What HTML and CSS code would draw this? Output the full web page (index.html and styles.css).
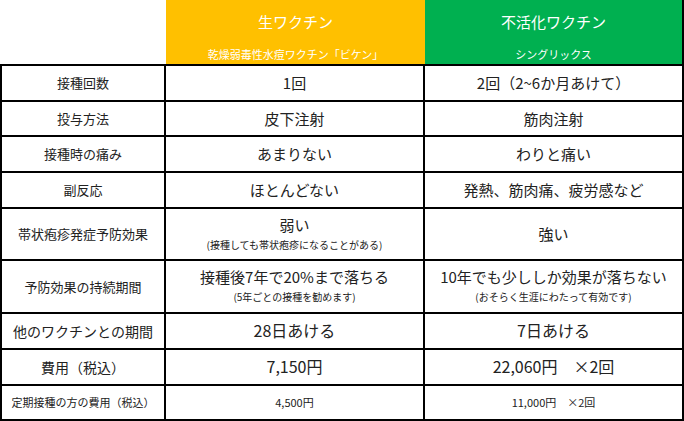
FILE: index.html
```html
<!DOCTYPE html>
<html lang="ja">
<head>
<meta charset="utf-8">
<title>帯状疱疹ワクチン比較</title>
<link rel="stylesheet" href="styles.css">
</head>
<body>
<div class="table">
  <div class="cell head blank"></div>
  <div class="cell head live">
    <div class="title">生ワクチン</div>
    <div class="sub">乾燥弱毒性水痘ワクチン「ビケン」</div>
  </div>
  <div class="cell head inact">
    <div class="title">不活化ワクチン</div>
    <div class="sub">シングリックス</div>
  </div>

  <div class="cell label">接種回数</div>
  <div class="cell val">1回</div>
  <div class="cell val">2回（2~6か月あけて）</div>

  <div class="cell label">投与方法</div>
  <div class="cell val">皮下注射</div>
  <div class="cell val">筋肉注射</div>

  <div class="cell label">接種時の痛み</div>
  <div class="cell val">あまりない</div>
  <div class="cell val">わりと痛い</div>

  <div class="cell label">副反応</div>
  <div class="cell val">ほとんどない</div>
  <div class="cell val">発熱、筋肉痛、疲労感など</div>

  <div class="cell label">帯状疱疹発症予防効果</div>
  <div class="cell val two"><span>弱い</span><span class="note">(接種しても帯状疱疹になることがある)</span></div>
  <div class="cell val">強い</div>

  <div class="cell label">予防効果の持続期間</div>
  <div class="cell val two"><span>接種後7年で20%まで落ちる</span><span class="note">(5年ごとの接種を勧めます)</span></div>
  <div class="cell val two"><span>10年でも少ししか効果が落ちない</span><span class="note">(おそらく生涯にわたって有効です)</span></div>

  <div class="cell label big">他のワクチンとの期間</div>
  <div class="cell val large">28日あける</div>
  <div class="cell val large">7日あける</div>

  <div class="cell label big">費用（税込）</div>
  <div class="cell val large">7,150円</div>
  <div class="cell val large">22,060円　×2回</div>

  <div class="cell label small">定期接種の方の費用（税込）</div>
  <div class="cell val small">4,500円</div>
  <div class="cell val small">11,000円　×2回</div>
</div>
</body>
</html>
```

FILE: styles.css
```css
html, body {
  margin: 0;
  padding: 0;
  background: #ffffff;
}

body {
  font-family: "Noto Sans CJK JP", "Noto Sans", sans-serif;
  color: #222222;
}

.table {
  display: grid;
  grid-template-columns: 166px 259px 259px;
  grid-template-rows: 66px 36px 35px 36px 36px 52px 53px 36px 36px 35px;
  width: 684px;
}

.cell {
  box-sizing: border-box;
  display: flex;
  flex-direction: column;
  align-items: center;
  justify-content: center;
  text-align: center;
  border-bottom: 2px solid #000;
  border-right: 2px solid #000;
  white-space: nowrap;
  line-height: 1.2;
}

.label {
  border-left: 2px solid #000;
  font-size: 13px;
}

.label.big {
  font-size: 14px;
}

.label.small {
  font-size: 11px;
}

.val {
  font-size: 15px;
}

.val.large {
  font-size: 16px;
}

.val.small {
  font-size: 11px;
}

.two {
  gap: 5px;
  padding-bottom: 2px;
}

.note {
  font-size: 10px;
}

.head {
  border-right: none;
  color: #ffffff;
  justify-content: flex-start;
}

.head.blank {
  background: #ffffff;
}

.head.live {
  background: #ffc000;
}

.head.inact {
  background: #00b050;
  border-right: 2px solid #000;
}

.title {
  font-size: 15px;
  margin-top: 13px;
}

.sub {
  font-size: 11px;
  margin-top: 17px;
}
```
